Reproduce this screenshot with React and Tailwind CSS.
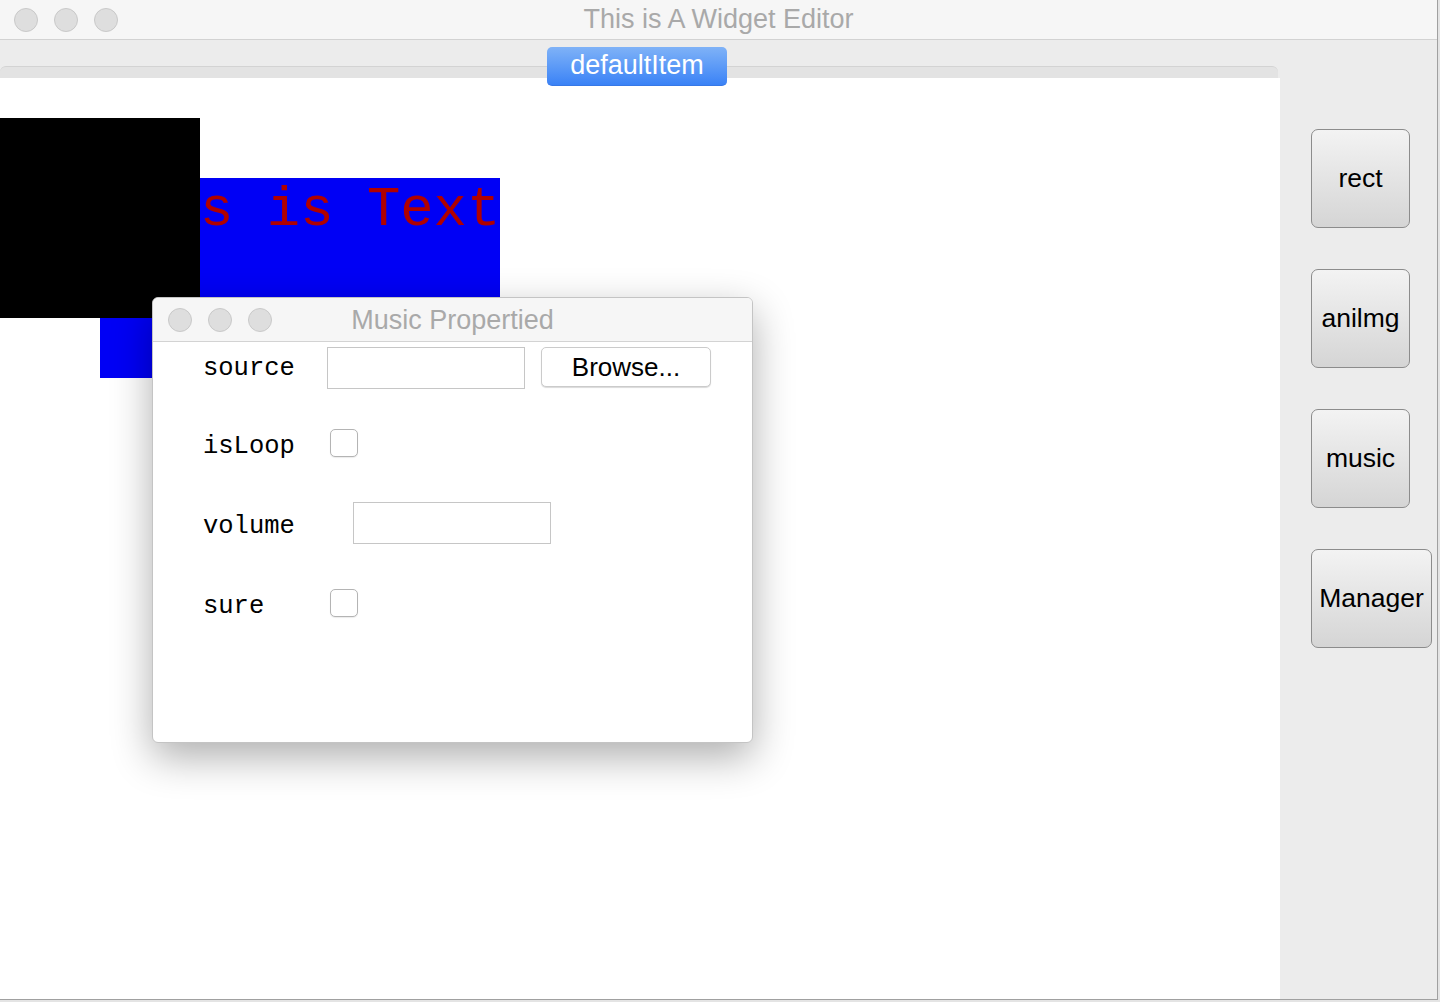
import React from "react";

const sans = { fontFamily: '"Liberation Sans", Arial, sans-serif' };
const mono = { fontFamily: '"Liberation Mono", "DejaVu Sans Mono", monospace' };

function Lights({ className = "" }) {
  return (
    <div className={"flex gap-[16px] " + className}>
      <span className="w-[24px] h-[24px] rounded-full bg-[#dedede] border border-[#c9c9c9]" />
      <span className="w-[24px] h-[24px] rounded-full bg-[#dedede] border border-[#c9c9c9]" />
      <span className="w-[24px] h-[24px] rounded-full bg-[#dedede] border border-[#c9c9c9]" />
    </div>
  );
}

function SideButton({ label, wide }) {
  return (
    <button
      className={
        (wide ? "w-[121px] " : "w-[99px] ") +
        "h-[99px] rounded-[7px] border-[1.5px] border-[#8c8c8c] bg-gradient-to-b from-[#f3f3f3] to-[#d5d5d5] text-black text-[26.5px] flex items-center justify-center"
      }
      style={sans}
    >
      {label}
    </button>
  );
}

function Checkbox() {
  return <span className="block w-[28px] h-[28px] rounded-[5px] border border-[#b4b4b4] bg-white shadow-[0_1px_1px_rgba(0,0,0,0.08)]" />;
}

function Label({ children }) {
  return (
    <span className="w-[124px] shrink-0 text-[25.5px] leading-[29px] text-black" style={mono}>
      {children}
    </span>
  );
}

export default function App() {
  return (
    <div className="w-[1440px] h-[1002px] bg-[#e4e4e4] overflow-hidden">
      <div className="w-[1438px] h-[1000px] bg-[#ececec] border-r border-b border-[#a0a0a0] flex flex-col">
        {/* title bar */}
        <div className="h-[40px] shrink-0 bg-[#f6f6f6] border-b border-[#d2d2d2] relative flex items-center">
          <Lights className="pl-[14px] gap-[16px]" />
          <div className="absolute inset-0 flex items-center justify-center text-[27px] text-[#a9a9a9] pb-[1px]" style={sans}>
            This is A Widget Editor
          </div>
        </div>
        {/* body */}
        <div className="flex flex-1 min-h-0">
          {/* tab widget */}
          <div className="w-[1280px] shrink-0 flex flex-col relative">
            <div className="h-[26px] shrink-0" />
            <div className="h-[12px] shrink-0 w-[1278px] bg-[#e3e3e3] border-t border-[#d3d3d3] rounded-t-[6px]" />
            {/* canvas */}
            <div className="flex-1 bg-white relative overflow-hidden">
              {/* blue text rect */}
              <div className="absolute left-[100px] top-[100px] w-[400px] h-[200px] bg-[#0000f5] overflow-hidden">
                <div className="-mt-[9px] text-[55.6px] leading-normal text-[#b00000] whitespace-nowrap" style={mono}>
                  This is Text
                </div>
              </div>
              {/* black rect */}
              <div className="absolute left-0 top-[40px] w-[200px] h-[200px] bg-black" />
              {/* dialog */}
              <div className="absolute left-[152px] top-[219px] w-[601px] h-[446px] bg-white rounded-[6px] border border-[#c4c4c4] shadow-[0_14px_40px_rgba(0,0,0,0.32)] flex flex-col overflow-hidden">
                <div className="h-[44px] shrink-0 bg-[#f6f6f6] border-b border-[#d3d3d3] relative flex items-center">
                  <Lights className="pl-[15px]" />
                  <div className="absolute inset-0 flex items-center justify-center text-[27px] text-[#a9a9a9] pt-[1px]" style={sans}>
                    Music Propertied
                  </div>
                </div>
                <div className="flex flex-col pl-[50px]">
                  <div className="h-[52px] flex items-center">
                    <Label>source</Label>
                    <div className="w-[198px] h-[42px] border border-[#c6c6c6] bg-white" />
                    <div className="ml-[16px] w-[170px] h-[40px] -mt-[2px] rounded-[5px] border border-[#cbcbcb] bg-white shadow-[0_1px_1px_rgba(0,0,0,0.15)] flex items-center justify-center text-[26px] text-black" style={sans}>
                      Browse...
                    </div>
                  </div>
                  <div className="h-[52px] mt-[26px] flex items-center">
                    <Label>isLoop</Label>
                    <div className="ml-[3px] -mt-[6px]">
                      <Checkbox />
                    </div>
                  </div>
                  <div className="h-[52px] mt-[28px] flex items-center">
                    <Label>volume</Label>
                    <div className="ml-[26px] -mt-[6px] w-[198px] h-[42px] border border-[#c6c6c6] bg-white" />
                  </div>
                  <div className="h-[52px] mt-[28px] flex items-center">
                    <Label>sure</Label>
                    <div className="ml-[3px] -mt-[6px]">
                      <Checkbox />
                    </div>
                  </div>
                </div>
              </div>
            </div>
            {/* tab button overlapping the pane */}
            <div className="absolute z-10 left-[547px] top-[7px] w-[180px] h-[39px] rounded-[5px] bg-gradient-to-b from-[#7fb2f7] to-[#3a82f6] border-b border-[#3778e6] flex items-center justify-center text-white text-[27px] pb-[2px]" style={sans}>
              defaultItem
            </div>
          </div>
          {/* right panel */}
          <div className="flex-1 flex flex-col items-start pl-[31px] pt-[89px] gap-[41px]">
            <SideButton label="rect" />
            <SideButton label="anilmg" />
            <SideButton label="music" />
            <SideButton label="Manager" wide />
          </div>
        </div>
      </div>
    </div>
  );
}
